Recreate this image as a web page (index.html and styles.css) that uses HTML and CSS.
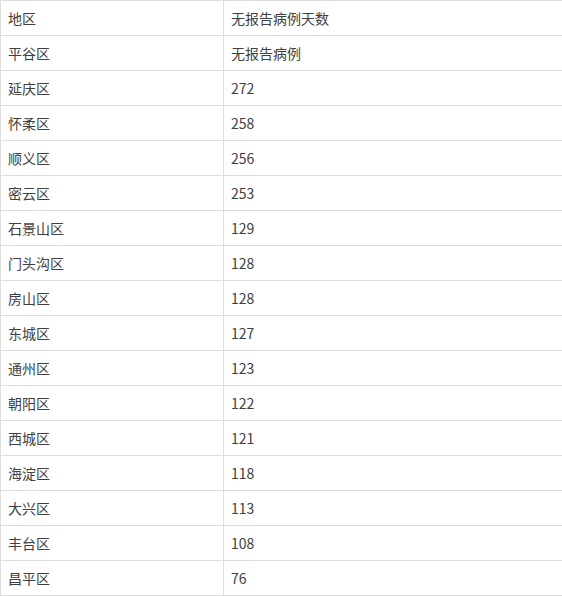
FILE: index.html
```html
<!DOCTYPE html>
<html lang="zh-CN">
<head>
<meta charset="utf-8">
<title>无报告病例天数</title>
<link rel="stylesheet" href="styles.css">
</head>
<body>
<table class="data-table">
  <colgroup>
    <col class="col-area">
    <col class="col-days">
  </colgroup>
  <tbody>
    <tr><td>地区</td><td>无报告病例天数</td></tr>
    <tr><td>平谷区</td><td>无报告病例</td></tr>
    <tr><td>延庆区</td><td>272</td></tr>
    <tr><td>怀柔区</td><td>258</td></tr>
    <tr><td>顺义区</td><td>256</td></tr>
    <tr><td>密云区</td><td>253</td></tr>
    <tr><td>石景山区</td><td>129</td></tr>
    <tr><td>门头沟区</td><td>128</td></tr>
    <tr><td>房山区</td><td>128</td></tr>
    <tr><td>东城区</td><td>127</td></tr>
    <tr><td>通州区</td><td>123</td></tr>
    <tr><td>朝阳区</td><td>122</td></tr>
    <tr><td>西城区</td><td>121</td></tr>
    <tr><td>海淀区</td><td>118</td></tr>
    <tr><td>大兴区</td><td>113</td></tr>
    <tr><td>丰台区</td><td>108</td></tr>
    <tr><td>昌平区</td><td>76</td></tr>
  </tbody>
</table>
</body>
</html>
```

FILE: styles.css
```css
html, body {
  margin: 0;
  padding: 0;
  background: #ffffff;
  overflow: hidden;
}

.data-table {
  width: 563px;
  table-layout: fixed;
  border-collapse: collapse;
  font-family: "Noto Sans CJK SC", "Noto Sans", sans-serif;
  font-size: 14px;
  color: #404040;
}

.col-area {
  width: 223px;
}

.data-table td {
  border: 1px solid #dddddd;
  padding: 8px 6px 8px 7px;
  line-height: 18px;
  white-space: nowrap;
  vertical-align: middle;
}
```
